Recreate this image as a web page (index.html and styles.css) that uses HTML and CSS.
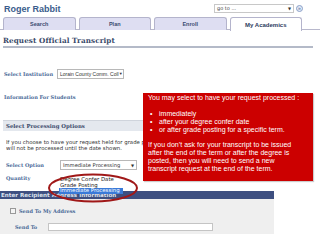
FILE: index.html
```html
<!DOCTYPE html>
<html>
<head>
<meta charset="utf-8">
<link rel="stylesheet" href="styles.css">
</head>
<body>
<div class="page">
  <div class="header">
    <div class="name">Roger Rabbit</div>
    <div class="goto">
      <div class="goto-select"><span>go to ...</span><span class="arrow">▼</span></div>
      <div class="goto-btn">»</div>
    </div>
  </div>
  <div class="tabs">
    <div class="tab">Search</div>
    <div class="tab">Plan</div>
    <div class="tab">Enroll</div>
    <div class="tab active">My Academics</div>
  </div>
  <div class="title">Request Official Transcript</div>
  <div class="inst-row">
    <span class="label">Select Institution</span>
    <div class="select inst-select"><span>Lorain County Comm. Coll</span><span class="arrow">▼</span></div>
  </div>
  <div class="info label">Information For Students</div>
  <div class="bar-light">Select Processing Options</div>
  <div class="para">If you choose to have your request held for grade posting or degree conferral, it<br>will not be processed until the date shown.</div>
  <div class="opt-row">
    <span class="label">Select Option</span>
    <div class="select opt-select"><span>Immediate Processing</span><span class="arrow">▼</span></div>
  </div>
  <div class="qty-row"><span class="label">Quantity</span></div>
  <div class="bar-dark">Enter Recipient Address Information</div>
  <div class="panel">
    <div class="chk-row"><span class="chk"></span><span class="label">Send To My Address</span></div>
    <div class="send-row"><span class="label">Send To</span><div class="input"></div></div>
  </div>

  <div class="dropdown">
    <div class="dd-item">Degree Confer Date</div>
    <div class="dd-item">Grade Posting</div>
    <div class="dd-item sel">Immediate Processing</div>
  </div>
  <svg class="oval" width="96" height="32" viewBox="0 0 96 32"><ellipse cx="48" cy="16" rx="44" ry="13.5" fill="none" stroke="#a01818" stroke-width="2"/></svg>

  <div class="callout">
    <p>You may select to have your request processed :</p>
    <ul>
      <li>immediately</li>
      <li>after your degree confer date</li>
      <li>or after grade posting for a specific term.</li>
    </ul>
    <p>If you don’t ask for your transcript to be issued<br>after the end of the term or after the degree is<br>posted, then you will need to send a new<br>transcript request at the end of the term.</p>
  </div>
</div>
</body>
</html>
```

FILE: styles.css
```css
* { box-sizing: border-box; }
html, body { margin: 0; padding: 0; background: #fff; }
.page { position: relative; width: 320px; height: 240px; overflow: hidden; font-family: "Liberation Sans", Arial, sans-serif; }

.header { display: flex; justify-content: space-between; align-items: center; height: 16px; padding: 0 17px 0 4px; }
.name { font-size: 9px; font-weight: bold; color: #3a5c8c; margin-top: 1px; }
.goto { display: flex; align-items: center; gap: 2px; }
.goto-select { width: 80px; height: 9px; border: 1px solid #c8c8c8; display: flex; justify-content: space-between; align-items: center; padding: 0 2px; font-size: 5px; color: #444; font-family: "DejaVu Sans", sans-serif; }
.goto-select .arrow { font-size: 4px; color: #333; }
.goto-btn { width: 7px; height: 7px; border-radius: 50%; border: 1px solid #8aa0c8; background: #e4eaf6; font-size: 5px; line-height: 5px; text-align: center; color: #4a6aa0; }

.tabs { display: flex; gap: 3px; padding: 1px 18px 0 3px; height: 14px; border-bottom: 1px solid #b8b8cc; }
.tab { flex: 1; height: 13px; background: #dedef2; border: 1px solid #b4b4cc; border-bottom: none; border-radius: 3px 3px 0 0; font-size: 5.5px; font-weight: bold; color: #3a4a70; display: flex; align-items: center; justify-content: center; }
.tab.active { background: #fff; height: 14px; color: #2c3c60; font-size: 6px; }

.title { margin: 6px 7px 0 3px; padding-bottom: 1px; font-family: "DejaVu Serif", serif; font-weight: bold; font-size: 7.2px; color: #3a4a6a; border-bottom: 2px solid #b4bac8; letter-spacing: 0.1px; }

.label { font-family: "DejaVu Serif", serif; font-weight: bold; font-size: 5px; color: #4a6a98; white-space: nowrap; }
.inst-row { display: flex; align-items: center; margin-top: 20px; padding-left: 4px; height: 11px; }
.inst-row .label { width: 53px; }
.select { height: 10px; border: 1px solid #b8b8b8; display: flex; align-items: center; justify-content: space-between; padding: 0 2px; font-family: "DejaVu Sans", sans-serif; font-size: 5.2px; color: #333; background: #fff; white-space: nowrap; }
.select .arrow { font-size: 4px; flex-shrink: 0; }
.inst-select { width: 67px; font-family: "Liberation Sans", Arial, sans-serif; font-size: 5px; }
.info { margin: 15px 0 0 4px; display: block; }

.bar-light { margin: 20px 7px 0 3px; height: 11px; background: #e4e8ee; border-top: 1px solid #cfd4dc; font-family: "DejaVu Serif", serif; font-weight: bold; font-size: 5.4px; color: #3a4a6a; display: flex; align-items: center; padding-left: 3px; }
.para { margin: 8px 0 0 6px; width: 137px; overflow: hidden; font-family: "DejaVu Sans", sans-serif; font-size: 5.4px; line-height: 6px; color: #333; white-space: nowrap; }
.opt-row { display: flex; align-items: center; margin-top: 9px; padding-left: 6px; height: 10px; }
.opt-row .label { width: 54px; }
.opt-select { width: 77px; }
.qty-row { margin-top: 3px; padding-left: 6px; height: 10px; display: flex; align-items: center; }
.bar-dark { margin-top: 8px; width: 274px; height: 8px; background: #3e4f80; color: #dde2ee; font-family: "DejaVu Sans", sans-serif; font-weight: bold; font-size: 5.6px; line-height: 8px; padding-left: 1px; white-space: nowrap; }
.panel { width: 274px; height: 35px; background: #efefef; padding: 8px 0 0 10px; }
.chk-row { display: flex; align-items: center; gap: 3px; height: 8px; }
.chk { width: 6px; height: 6px; border: 1px solid #999; background: #f4f4f4; }
.send-row { display: flex; align-items: center; margin-top: 7px; padding-left: 5px; height: 9px; }
.send-row .label { width: 33px; }
.input { width: 165px; height: 8px; background: #fff; border: 1px solid #c4c4c4; }

.dropdown { position: absolute; left: 59px; top: 177px; width: 64px; background: #fff; font-family: "DejaVu Sans", sans-serif; font-size: 5.4px; color: #222; }
.dd-item { height: 5.6px; line-height: 5.6px; padding-left: 1px; white-space: nowrap; }
.dd-item.sel { background: #3a7ad8; color: #fff; }
.oval { position: absolute; left: 45px; top: 172px; }

.callout { position: absolute; left: 143px; top: 93px; width: 170px; height: 88px; background: #cc0000; color: #fff; font-family: "Liberation Sans", Arial, sans-serif; font-size: 7px; line-height: 8px; padding: 1px 3px 0 5px; box-shadow: 1px 1px 1px rgba(0,0,0,0.2); white-space: nowrap; }
.callout p { margin: 0; }
.callout ul { margin: 8px 0 7px 0; padding-left: 11px; list-style: none; }
.callout li { position: relative; }
.callout li::before { content: "•"; position: absolute; left: -9px; }
```
